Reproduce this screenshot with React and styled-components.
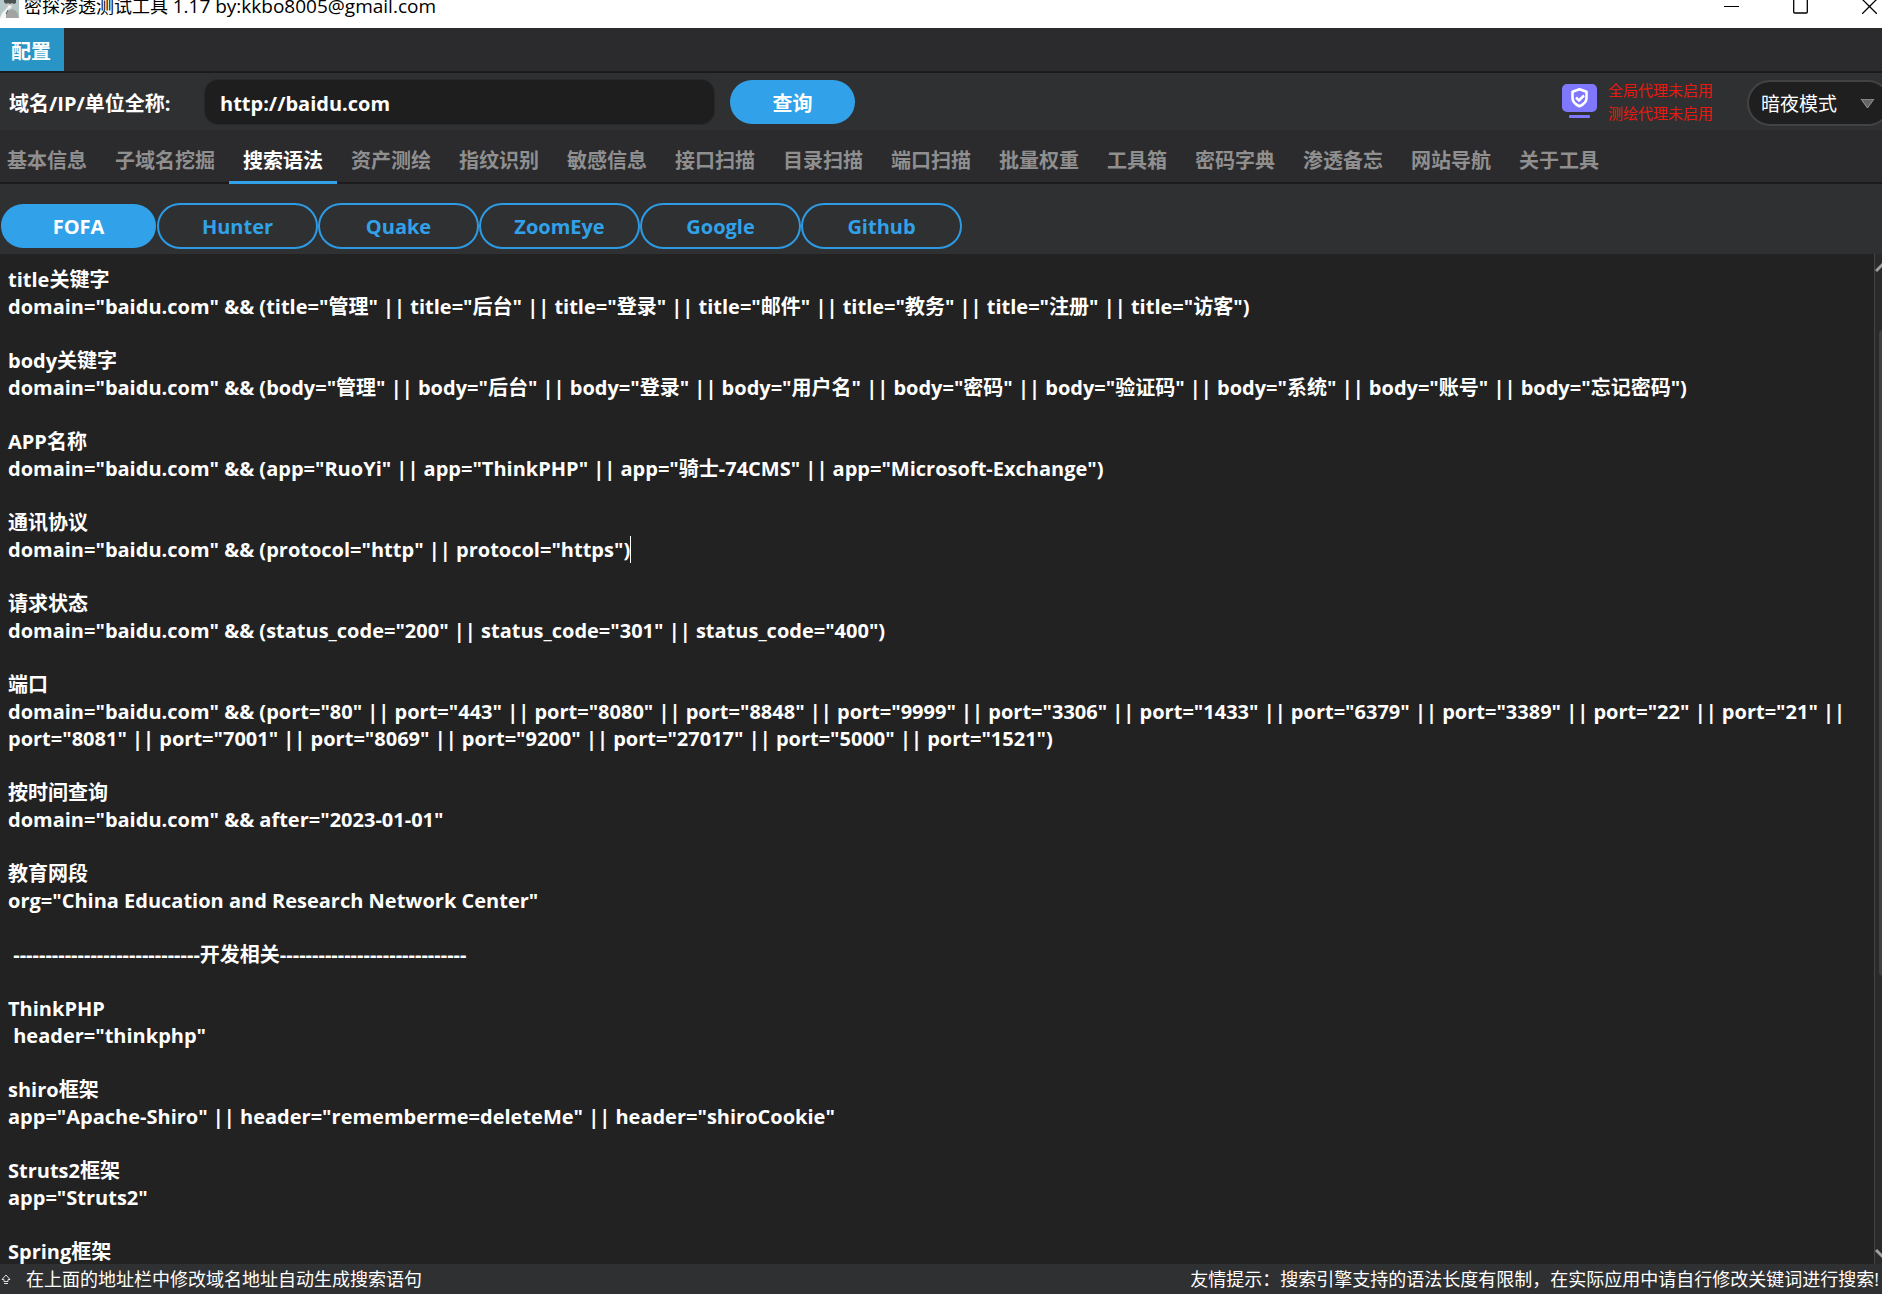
import React, { useLayoutEffect, useRef, useState } from 'react'
import styled, { createGlobalStyle } from 'styled-components'

const GlobalStyle = createGlobalStyle`
  * {
    box-sizing: border-box;
  }

  html, body, #root {
    height: 100%;
  }

  body {
    margin: 0;
    overflow: hidden;
    background: #2f3032;
  }

  body, button, input, select, textarea {
    font-family: "Open Sans", "Noto Sans CJK SC", sans-serif;
  }
`

const Window = styled.div`
  display: flex;
  flex-direction: column;
  height: 100vh;
  overflow: hidden;
  color: #fff;
`

const TitleBar = styled.header`
  display: flex;
  align-items: center;
  flex: none;
  height: 28px;
  padding: 0 5px 17px 0;
  overflow: hidden;
  background: #fff;
  color: #000;
`

const Avatar = styled.svg`
  flex: none;
  width: 19px;
  height: 24px;
  margin-right: 5px;
`

const Title = styled.h1`
  flex: 1;
  margin: 0;
  font-size: 18px;
  font-weight: 400;
  line-height: 24px;
  white-space: nowrap;

  span {
    font-size: 19px;
  }
`

const WindowButtons = styled.div`
  display: flex;
  gap: 54px;

  button {
    display: flex;
    padding: 0;
    border: 0;
    background: none;
    color: #000;
  }
`

const MenuBar = styled.nav`
  display: flex;
  flex: none;
  height: 45px;
  border-bottom: 2px solid #1b1b1c;
  background: #2b2b2d;

  button {
    width: 64px;
    padding: 2px 2px 0 0;
    border: 0;
    background: #2994c6;
    color: #fff;
    font-size: 20px;
    font-weight: 700;
  }
`

const SearchRow = styled.form`
  display: flex;
  align-items: center;
  flex: none;
  height: 57px;
  padding: 1px 0 0 9px;
  background: #2f3032;

  label {
    width: 195px;
    font-size: 20px;
    font-weight: 700;
    white-space: nowrap;
  }
`

const DomainInput = styled.input`
  width: 511px;
  height: 46px;
  padding: 2px 15px 0;
  border: 1px solid #27282a;
  border-radius: 14px;
  outline: 0;
  background: #1e1e1e;
  color: #fff;
  font-size: 20px;
  font-weight: 700;
`

const Pill = styled.button`
  height: ${p => (p.$filled ? 44 : 46)}px;
  width: ${p => p.$width}px;
  padding: 0;
  border: ${p => (p.$filled ? '0' : '2px solid #2d9be3')};
  border-radius: 23px;
  background: ${p => (p.$filled ? '#31a2e9' : 'transparent')};
  color: ${p => (p.$filled ? '#fff' : '#31a2e9')};
  font-size: 20px;
  font-weight: 700;
`

const SearchButton = styled(Pill)`
  margin-left: 15px;
`

const ProxyStatus = styled.div`
  display: flex;
  align-items: center;
  gap: 10px;
  margin-left: auto;
  color: #e8190f;
  font-size: 15px;
  line-height: 23px;
  white-space: nowrap;

  p {
    margin: 0;
  }
`

const ModeBox = styled.div`
  position: relative;
  flex: none;
  width: 144px;
  margin: 1px -9px 0 34px;

  select {
    width: 100%;
    height: 46px;
    padding: 2px 12px 0;
    appearance: none;
    border: 2px solid #424344;
    border-radius: 23px;
    outline: 0;
    background: #1f1f1f;
    color: #fff;
    font-size: 19px;
  }

  svg {
    position: absolute;
    top: 19px;
    right: 16px;
    pointer-events: none;
  }
`

const Tabs = styled.nav`
  display: flex;
  flex: none;
  height: 54px;
  padding-left: 1px;
  margin-left: -8px;
  border-bottom: 2px solid #1b1b1c;
  background: #2b2b2d;
`

const Tab = styled.button`
  height: 54px;
  padding: 8px 14px 0;
  border: 0;
  border-bottom: 3px solid ${p => (p.$active ? '#31a2e9' : 'transparent')};
  background: none;
  color: ${p => (p.$active ? '#fff' : '#8f8f90')};
  font-size: 20px;
  font-weight: 700;
  white-space: nowrap;
`

const Engines = styled.div`
  display: flex;
  align-items: center;
  flex: none;
  height: 70px;
  padding: 14px 0 0 1px;
  background: #2f3032;

  ${Pill}:first-child {
    margin-right: 1px;
  }
`

const Editor = styled.main`
  position: relative;
  display: flex;
  flex: 1;
  min-height: 0;
  background: #222;

  textarea {
    flex: 1;
    padding: 12px 20px 0 8px;
    overflow: hidden;
    border: 0;
    outline: 0;
    resize: none;
    background: none;
    color: #fff;
    font-size: 20px;
    font-weight: 700;
    line-height: 27px;
  }
`

const Caret = styled.span`
  position: absolute;
  width: 1px;
  height: 27px;
  background: #fff;
`

const ScrollBar = styled.div`
  display: flex;
  flex-direction: column;
  width: 8px;
  overflow: hidden;
  border-left: 1px solid #454546;
  background: #2a2a2b;

  svg {
    flex: none;
  }
`

const Thumb = styled.div`
  width: 14px;
  height: 64%;
  margin: 54px 0 auto 4px;
  border-radius: 4px;
  background: #404041;
`

const StatusBar = styled.footer`
  display: flex;
  align-items: center;
  flex: none;
  height: 30px;
  padding: 1px 3px 0 1px;
  background: #2f3032;
  font-size: 18px;
  line-height: 29px;
  white-space: nowrap;

  svg {
    margin-right: 15px;
  }

  span:last-child {
    margin-left: auto;
  }
`

const tabs = [
  '基本信息', '子域名挖掘', '搜索语法', '资产测绘', '指纹识别',
  '敏感信息', '接口扫描', '目录扫描', '端口扫描', '批量权重',
  '工具箱', '密码字典', '渗透备忘', '网站导航', '关于工具',
]

const engines = ['FOFA', 'Hunter', 'Quake', 'ZoomEye', 'Google', 'Github']

const syntax = `title关键字
domain="baidu.com" && (title="管理" || title="后台" || title="登录" || title="邮件" || title="教务" || title="注册" || title="访客")

body关键字
domain="baidu.com" && (body="管理" || body="后台" || body="登录" || body="用户名" || body="密码" || body="验证码" || body="系统" || body="账号" || body="忘记密码")

APP名称
domain="baidu.com" && (app="RuoYi" || app="ThinkPHP" || app="骑士-74CMS" || app="Microsoft-Exchange")

通讯协议
domain="baidu.com" && (protocol="http" || protocol="https")

请求状态
domain="baidu.com" && (status_code="200" || status_code="301" || status_code="400")

端口
domain="baidu.com" && (port="80" || port="443" || port="8080" || port="8848" || port="9999" || port="3306" || port="1433" || port="6379" || port="3389" || port="22" || port="21" || port="8081" || port="7001" || port="8069" || port="9200" || port="27017" || port="5000" || port="1521")

按时间查询
domain="baidu.com" && after="2023-01-01"

教育网段
org="China Education and Research Network Center"

 -----------------------------开发相关-----------------------------

ThinkPHP
 header="thinkphp"

shiro框架
app="Apache-Shiro" || header="rememberme=deleteMe" || header="shiroCookie"

Struts2框架
app="Struts2"

Spring框架`

const caretLine = 10

const SyntaxEditor = () => {
  const area = useRef(null)
  const [caret, setCaret] = useState(null)

  // put the caret at the end of its line, whatever the font is
  useLayoutEffect(() => {
    const css = getComputedStyle(area.current)
    const ctx = document.createElement('canvas').getContext('2d')
    ctx.font = `${css.fontWeight} ${css.fontSize} ${css.fontFamily}`
    setCaret({
      left: parseFloat(css.paddingLeft) + ctx.measureText(syntax.split('\n')[caretLine]).width,
      top: parseFloat(css.paddingTop) + caretLine * parseFloat(css.lineHeight),
    })
  }, [])

  return (
    <Editor>
      <textarea ref={area} aria-label="搜索语法" spellCheck="false" defaultValue={syntax} />
      {caret && <Caret style={caret} />}
      <ScrollBar>
        <svg width="20" height="22" fill="none" stroke="#a0a0a0" strokeWidth="3">
          <path d="M1 17l8-8 8 8" />
        </svg>
        <Thumb />
        <svg width="20" height="22" fill="none" stroke="#a0a0a0" strokeWidth="3">
          <path d="M1 8l8 8 8-8" />
        </svg>
      </ScrollBar>
    </Editor>
  )
}

const App = () => {
  const [tab, setTab] = useState('搜索语法')
  const [engine, setEngine] = useState('FOFA')

  return (
    <Window>
      <GlobalStyle />

      <TitleBar>
        <Avatar viewBox="0 0 19 24">
          <rect width="19" height="24" fill="#b4c8c8" />
          <path d="M5 6h9l-1 8-3 3-4-3z" fill="#c3c6c5" />
          <path d="M4 3h12v6l-2 1-2-1-2 1-2-1-2 1-2-2z" fill="#4c5152" />
          <path d="M7 14l2-3 3 1-2 3z" fill="#f4f5f4" />
          <path d="M4 24l3-7 6-2 4 3 2 6z" fill="#a2a4a4" />
          <path d="M0 24l2-5 5-5 2 1-3 5v4z" fill="#f4f5f4" />
          <path d="M6 20l2-4" stroke="#555" fill="none" />
        </Avatar>
        <Title>密探渗透测试工具 <span>1.17 by:kkbo8005@gmail.com</span></Title>
        <WindowButtons>
          <button aria-label="最小化">
            <svg width="15" height="16"><path d="M0 8.5h15" stroke="#000" /></svg>
          </button>
          <button aria-label="最大化">
            <svg width="15" height="16"><rect x=".7" y="0" width="13.600" height="15" rx="1" fill="none" stroke="#000" strokeWidth="1.300" /></svg>
          </button>
          <button aria-label="关闭">
            <svg width="15" height="16"><path d="M0 1l15 15M15 1L0 16" stroke="#000" strokeWidth="1.300" /></svg>
          </button>
        </WindowButtons>
      </TitleBar>

      <MenuBar>
        <button>配置</button>
      </MenuBar>

      <SearchRow onSubmit={e => e.preventDefault()}>
        <label htmlFor="domain">域名/IP/单位全称:</label>
        <DomainInput id="domain" defaultValue="http://baidu.com" />
        <SearchButton $filled $width={125}>查询</SearchButton>
        <ProxyStatus>
          <svg width="36" height="36" viewBox="0 0 36 36">
            <rect x="0" y="0" width="35" height="28" rx="5" fill="#7f78ff" />
            <rect x="7" y="31" width="21" height="3" rx="1" fill="#7f78ff" />
            <path d="M17.500 5.200l7 2.600v6.200c0 4-3 6.500-7 8.300-4-1.800-7-4.300-7-8.300v-6.200z" fill="none" stroke="#fff" strokeWidth="2.600" strokeLinejoin="round" />
            <path d="M14 13.500l3 3 5-5" fill="none" stroke="#fff" strokeWidth="2.500" />
          </svg>
          <div>
            <p>全局代理未启用</p>
            <p>测绘代理未启用</p>
          </div>
        </ProxyStatus>
        <ModeBox>
          <select aria-label="显示模式" defaultValue="暗夜模式">
            <option>暗夜模式</option>
          </select>
          <svg width="15" height="10"><path d="M1 0h13L7.500 9z" fill="#666" stroke="#999" /></svg>
        </ModeBox>
      </SearchRow>

      <Tabs>
        {tabs.map(name => (
          <Tab key={name} $active={name === tab} onClick={() => setTab(name)}>{name}</Tab>
        ))}
      </Tabs>

      <Engines>
        {engines.map(name => (
          <Pill
            key={name}
            $filled={name === engine}
            $width={name === engine ? 155 : 161}
            onClick={() => setEngine(name)}
          >
            {name}
          </Pill>
        ))}
      </Engines>

      <SyntaxEditor />

      <StatusBar>
        <svg width="10" height="12" fill="none" stroke="#ddd">
          <path d="M5 1L1 5.500h2v2h4v-2h2zM3 9.500h4" />
        </svg>
        <span>在上面的地址栏中修改域名地址自动生成搜索语句</span>
        <span>友情提示：搜索引擎支持的语法长度有限制，在实际应用中请自行修改关键词进行搜索!</span>
      </StatusBar>
    </Window>
  )
}

export default App
